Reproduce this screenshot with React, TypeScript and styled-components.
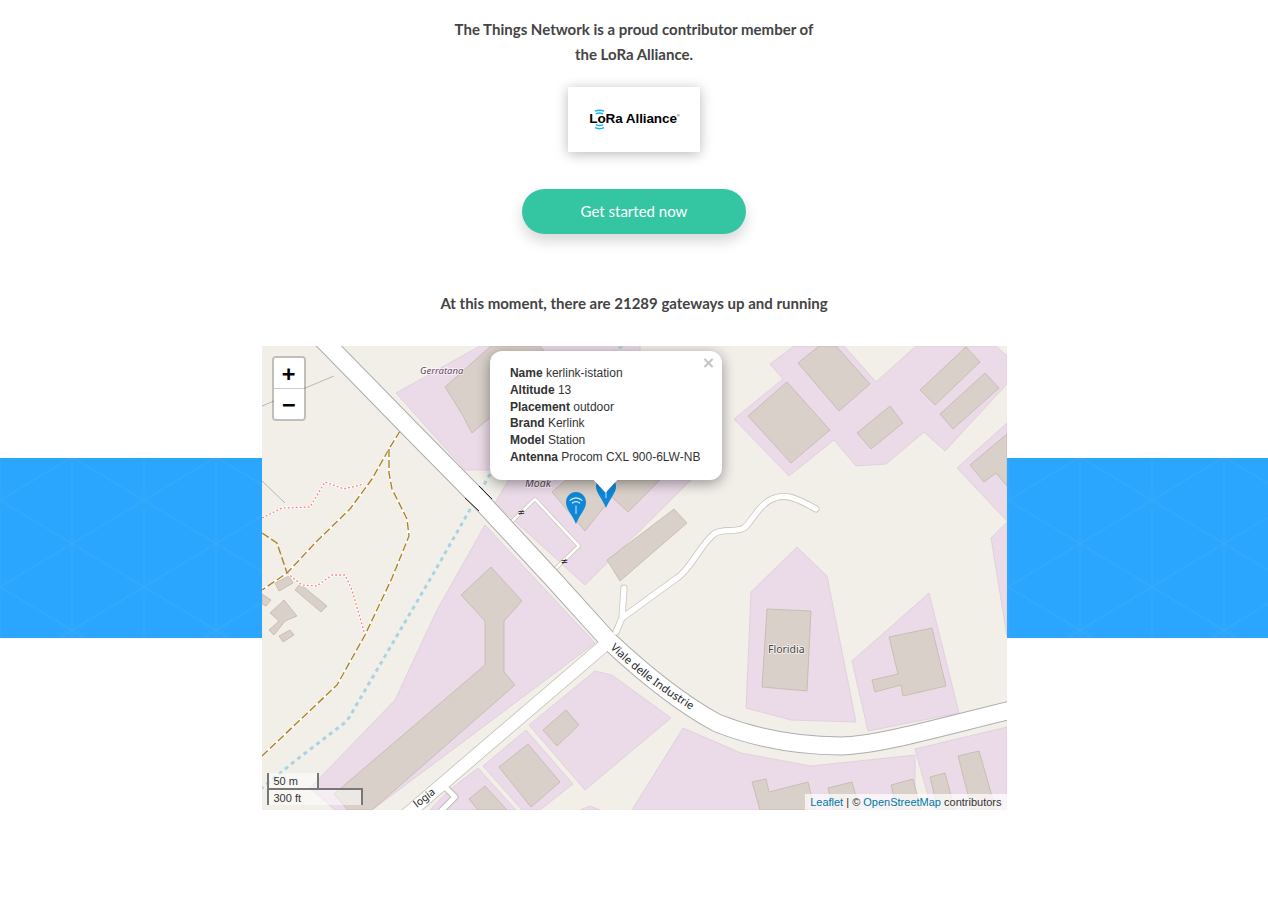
import React from "react";
import styled, { createGlobalStyle } from "styled-components";

const Global = createGlobalStyle`
  html, body { margin: 0; padding: 0; background: #fff; }
  body { font-family: Lato, "Liberation Sans", sans-serif; color: #444; }
`;
const Page = styled.main`
  display: flex; flex-direction: column; align-items: center;
  padding-top: 17px; min-height: 893px;
`;
const Lead = styled.p`
  margin: 0; width: 370px; text-align: center;
  font: 700 15px/25px Lato, sans-serif; color: #444;
`;
const LogoCard = styled.div`
  margin-top: 20px; width: 132px; height: 65px; background: #fff;
  display: flex; align-items: center; justify-content: center;
  box-shadow: 0 2px 12px rgba(0,0,0,.28);
`;
const LogoWord = styled.div`
  position: relative; display: flex; align-items: flex-start; margin: 0 0 2px 1px;
  font: 700 13.5px/14px "Liberation Sans", sans-serif; color: #000; letter-spacing: -.1px;
  white-space: nowrap;
`;
const LogoWaves = styled.svg`
  position: absolute; left: 5px; top: -3px; width: 11px; height: 22px;
`;
const Reg = styled.span`
  font-size: 4px; line-height: 8px; font-weight: 400;
`;
const CallToAction = styled.a`
  margin-top: 37px; width: 224px; height: 45px; box-sizing: border-box; padding-bottom: 2px;
  border-radius: 23px;
  display: flex; align-items: center; justify-content: center;
  background: #34c5a2; color: #fff; font: 400 15px Lato, sans-serif;
  box-shadow: 0 7px 14px rgba(0,0,0,.16);
`;
const Status = styled(Lead)`
  margin-top: 57px; width: 600px;
`;
const MapSection = styled.section`
  position: relative; margin-top: 30px; width: 100%;
  display: flex; justify-content: center;
`;
const Band = styled.svg`
  position: absolute; left: 0; top: 112px; width: 100%; height: 180px; display: block;
`;
const MapFrame = styled.div`
  position: relative; width: 745px; height: 464px; overflow: hidden; background: #f2efe9;
`;
const Tiles = styled.svg`
  display: block; width: 745px; height: 464px;
`;
const ZoomBox = styled.div`
  position: absolute; left: 10px; top: 10px;
  display: flex; flex-direction: column; width: 30px;
  border: 2px solid rgba(0,0,0,.2); border-radius: 4px; background-clip: padding-box;
`;
const ZoomButton = styled.a`
  width: 30px; height: 30px; background: #fff; color: #000; text-align: center;
  font: 700 22px/32px "DejaVu Sans Mono", monospace; overflow: hidden;
  &:first-child { border-bottom: 1px solid #ccc; border-radius: 2px 2px 0 0; }
  &:last-child { border-radius: 0 0 2px 2px; }
`;
const Marker = styled.svg<{ $x: number; $y: number }>`
  position: absolute; left: ${p => p.$x}px; top: ${p => p.$y}px; width: 20px; height: 32px;
`;
const Popup = styled.div`
  position: absolute; left: 228px; top: 5px; width: 232px; box-sizing: border-box;
  padding: 14px 20px 14px 20.4px; background: #fff; border-radius: 12px; color: #333;
  font: 12px/16.8px "Liberation Sans", sans-serif; white-space: nowrap;
  box-shadow: 0 3px 14px rgba(0,0,0,.4);
`;
const PopupRow = styled.div`
  b { font-weight: 700; }
`;
const PopupClose = styled.a`
  position: absolute; top: 1px; right: 0; width: 18px; height: 14px; padding: 4px 4px 0 0;
  text-align: center; color: #c3c3c3; font: 700 16px/14px "DejaVu Sans", sans-serif;
`;
const PopupTip = styled.div`
  position: absolute; left: 50%; top: 100%; margin-left: -12px; width: 24px; height: 13px;
  background: #fff; clip-path: polygon(0 0, 100% 0, 50% 100%);
`;
const ScaleBox = styled.div`
  position: absolute; left: 5px; bottom: 5px;
  display: flex; flex-direction: column; align-items: flex-start;
`;
const ScaleLine = styled.div<{ $w: number; $lower?: boolean }>`
  box-sizing: border-box; width: ${p => p.$w}px; height: 17px; padding: 2px 5px 1px;
  border: 2px solid #777; background: rgba(255,255,255,.5); color: #333;
  font: 11px/12px "Liberation Sans", sans-serif; white-space: nowrap;
  border-top: ${p => (p.$lower ? "2px solid #777" : "none")};
  border-bottom: ${p => (p.$lower ? "none" : "2px solid #777")};
  margin-top: ${p => (p.$lower ? "-2px" : "0")};
`;
const Attribution = styled.div`
  position: absolute; right: 0; bottom: 0; height: 16px; padding: 0 5px;
  background: rgba(255,255,255,.7); color: #333;
  font: 11px/16px "Liberation Sans", sans-serif; white-space: nowrap;
  a { color: #0078a8; }
`;
const Land = styled.polygon`
  fill: #ebdbe8; stroke: #dccdd8; stroke-width: .8;
`;
const Building = styled.polygon`
  fill: #d9d0c9; stroke: #c4b6ab; stroke-width: .8;
`;
const Line = styled.polyline<{ $c: string; $w: number; $dash?: string }>`
  fill: none; stroke: ${p => p.$c}; stroke-width: ${p => p.$w};
  stroke-dasharray: ${p => p.$dash || "none"}; stroke-linejoin: round;
`;
const Curve = styled.path<{ $c: string; $w: number; $round?: boolean }>`
  fill: none; stroke: ${p => p.$c}; stroke-width: ${p => p.$w};
  stroke-linejoin: round; stroke-linecap: ${p => (p.$round ? "round" : "butt")};
`;
const MapLabel = styled.text<{ $c: string; $s: number; $italic?: boolean }>`
  fill: ${p => p.$c}; font-family: "Noto Sans", "Open Sans", sans-serif;
  font-size: ${p => p.$s}px; font-style: ${p => (p.$italic ? "italic" : "normal")};
  paint-order: stroke; stroke: rgba(255,255,255,.75); stroke-width: 1.6px;
`;
const RoadLabel = styled(MapLabel)`
  stroke: none;
`;

const lands = [
  "396,393 480,346 640,346 640,430 520,470 465,470",
  "509,479 691,480 585,585 495,503",
  "770,364 794,346 844,346 876,382 916,346 996,346 1007,356 1007,384 945,451 924,432 886,464 856,466 834,440 789,476 734,419 783,379",
  "957,468 1007,423 1007,521",
  "991,538 1007,522 1007,636",
  "797,547 827,576 856,722 791,720 746,708 751,592",
  "852,661 929,593 959,713 868,731",
  "683,728 741,753 811,766 915,755 915,810 632,810",
  "915,749 1007,727 1007,810 932,810",
  "485,525 595,643 372,810 335,810 310,788 395,700 437,610",
  "529,725 595,671 612,675 671,718 585,790",
  "483,766 526,730 573,784 540,810 522,810",
  "448,791 478,768 516,810 430,810",
  "580,810 590,806 600,810",
];
const buildings = [
  "445,387 491,346 540,346 560,370 486,421 472,433 462,414",
  "552,492 566,480 660,480 628,512 612,497 585,531",
  "607,560 674,509 687,523 620,581",
  "748,416 787,382 830,430 791,463",
  "798,363 819,346 836,346 870,384 839,411",
  "857,433 890,406 903,423 871,449",
  "920,390 966,347 980,362 935,405",
  "940,414 985,373 999,388 953,429",
  "970,465 1007,434 1007,486 996,473 984,482",
  "767,609 811,611 807,691 762,687",
  "889,637 932,628 946,686 903,696 901,685 875,692 872,680 898,674",
  "958,756 979,751 996,810 972,810",
  "752,782 766,779 769,792 808,782 815,810 760,810",
  "828,788 852,782 860,810 833,810",
  "891,785 913,779 921,810 897,810",
  "930,777 945,773 955,810 938,810",
  "461,595 491,567 522,601 504,621 504,672 515,685 372,810 348,810 334,794 485,665 485,621",
  "543,730 566,710 579,725 557,746",
  "499,767 528,744 560,782 531,807",
  "469,799 485,786 507,810 478,810",
  "262,594 271,600 266,606 262,604",
  "275,583 289,576 293,583 279,591",
  "295,590 300,584 327,606 321,612",
  "270,613 284,600 297,616 285,621 274,635 269,630 279,621",
  "279,636 290,630 294,635 283,642",
];
const mainRoad = "M316 333 L 329 346 L 412 431 L 478 498 L 552 578 L 609 641 C 640 670 680 703 717 723 C 765 742 810 746 841 746 C 880 745 940 727 1015 709";
const sideRoad = "M606 644 L 412 810 L 400 820";
const spur = "M444 786 L 455 797 L 441 811";
const serviceRoad = "M624 588 L 622 618 L 616 632 M622 618 L 677 578 C 690 570 700 545 714 534 C 722 528 735 533 744 528 C 752 522 760 502 775 498 C 785 494 795 497 816 509";
const yard = "505,528 535,499 579,546 553,571";
const brownDash = "8 3";

const Pin: React.FC<{ x: number; y: number }> = ({ x, y }) => (
  <Marker $x={x} $y={y} viewBox="0 0 20 32">
    <path d="M10 0C4.4 0 0 4.5 0 10.4 0 17 6 22 10 32 14 22 20 17 20 10.4 20 4.5 15.6 0 10 0Z" fill="#0f86d6" />
    <path d="M3.6 8.6Q10 3 16.4 8.6M6 11.2Q10 8 14 11.2" fill="none" stroke="#dff1fb" strokeWidth="1.2" />
    <path d="M10 13.5V22" stroke="#a9d8f3" strokeWidth="1.2" />
  </Marker>
);

export default function App() {
  return (
    <>
      <Global />
      <Page>
        <Lead>The Things Network is a proud contributor member of the LoRa Alliance.</Lead>
        <LogoCard>
          <LogoWord>
            LoRa Alliance<Reg>®</Reg>
            <LogoWaves viewBox="0 0 12 24">
              <path d="M2 5.4Q6 3.4 10 5.4M1 2.4Q6 .2 11 2.4M2 17Q6 19 10 17M1 20.4Q6 22.6 11 20.4" fill="none" stroke="#12b4ee" strokeWidth="1.5" />
            </LogoWaves>
          </LogoWord>
        </LogoCard>
        <CallToAction>Get started now</CallToAction>
        <Status>At this moment, there are 21289 gateways up and running</Status>
        <MapSection>
          <Band preserveAspectRatio="none">
            <defs>
              <pattern id="tri" x="0" y="-1" width="144" height="86.6" patternUnits="userSpaceOnUse">
                <rect width="144" height="86.6" fill="#2aa6ff" />
                <path d="M0 43.3L72 0L144 43.3L72 86.6ZM72 0V86.6M144 0V86.6M0 0V86.6" fill="none" stroke="#38aafa" strokeWidth="1.3" />
              </pattern>
            </defs>
            <rect width="100%" height="100%" fill="url(#tri)" />
          </Band>
          <MapFrame>
            <Tiles viewBox="262 346 745 464">
              <rect x="262" y="346" width="745" height="464" fill="#f2efe9" />
              {lands.map(p => <Land key={p} points={p} />)}
              {buildings.map(p => <Building key={p} points={p} />)}
              <Line points="262,406 334,376" $c="#aaa" $w={0.8} />
              <Line points="262,481 285,503" $c="#aaa" $w={0.8} />
              <Line points="622,346 608,358 492,471 432,576 347,721 295,761 262,788" $c="#a8d4e2" $w={3} $dash="4 4" />
              <Line points="262,518 282,508 310,507 325,482 344,489 364,484" $c="#fff" $w={2.4} />
              <Line points="262,518 282,508 310,507 325,482 344,489 364,484" $c="#f7897c" $w={1.3} $dash="2 2" />
              <Line points="287,573 302,585 317,586 332,575 345,575 352,590 365,635" $c="#fff" $w={2.4} />
              <Line points="287,573 302,585 317,586 332,575 345,575 352,590 365,635" $c="#f7897c" $w={1.3} $dash="2 2" />
              <Line points="400,431 389,449 372,479 350,509 317,541 287,573 262,590" $c="#fff" $w={2.4} />
              <Line points="400,431 389,449 372,479 350,509 317,541 287,573 262,590" $c="#ac8327" $w={1.4} $dash={brownDash} />
              <Line points="389,449 389,473 392,489 407,519 409,536 392,578 365,635 337,685 262,756" $c="#fff" $w={2.4} />
              <Line points="389,449 389,473 392,489 407,519 409,536 392,578 365,635 337,685 262,756" $c="#ac8327" $w={1.4} $dash={brownDash} />
              <Line points="262,533 277,543 287,573" $c="#ac8327" $w={1.4} $dash={brownDash} />
              <Line points={yard} $c="#c9c1b9" $w={4} />
              <Line points={yard} $c="#fff" $w={2.6} />
              <Curve d={serviceRoad} $c="#cbc6be" $w={7} $round />
              <Curve d={sideRoad} $c="#c4bfb9" $w={14} />
              <Curve d={spur} $c="#bbb" $w={7} />
              <Curve d={mainRoad} $c="#adadad" $w={19} />
              <Curve d={serviceRoad} $c="#fff" $w={5.4} $round />
              <Curve d={sideRoad} $c="#fff" $w={12.4} />
              <Curve d={spur} $c="#fff" $w={5} />
              <Curve d={mainRoad} $c="#fff" $w={17} />
              <Line points="465,498 479,511" $c="#222" $w={1} />
              <Line points="479,486 492,499" $c="#222" $w={1} />
              <defs>
                <path id="viale" d="M610 648 C 630 668 660 692 698 714" />
              </defs>
              <RoadLabel $c="#222" $s={11}>
                <textPath href="#viale">Viale delle Industrie</textPath>
              </RoadLabel>
              <RoadLabel $c="#222" $s={10.5} transform="rotate(-38 417 808)" x="417" y="808">logia</RoadLabel>
              <MapLabel $c="#444" $s={10.5} x="768" y="653">Floridia</MapLabel>
              <MapLabel $c="#66405f" $s={9.5} $italic x="420" y="374">Gerratana</MapLabel>
              <MapLabel $c="#66405f" $s={10.5} $italic x="525" y="487">Moak</MapLabel>
              <text x="517.5" y="515" fontSize="9" fontFamily="DejaVu Sans" fill="#222">≠</text>
              <text x="560.5" y="564" fontSize="9" fontFamily="DejaVu Sans" fill="#222">≠</text>
            </Tiles>
            <ZoomBox>
              <ZoomButton>+</ZoomButton>
              <ZoomButton>−</ZoomButton>
            </ZoomBox>
            <Pin x={334} y={130} />
            <Pin x={304} y={146} />
            <Popup>
              <PopupClose>×</PopupClose>
              <PopupRow><b>Name</b> kerlink-istation</PopupRow>
              <PopupRow><b>Altitude</b> 13</PopupRow>
              <PopupRow><b>Placement</b> outdoor</PopupRow>
              <PopupRow><b>Brand</b> Kerlink</PopupRow>
              <PopupRow><b>Model</b> Station</PopupRow>
              <PopupRow><b>Antenna</b> Procom CXL 900-6LW-NB</PopupRow>
              <PopupTip />
            </Popup>
            <ScaleBox>
              <ScaleLine $w={52}>50 m</ScaleLine>
              <ScaleLine $w={96} $lower>300 ft</ScaleLine>
            </ScaleBox>
            <Attribution>
              <a>Leaflet</a> | © <a>OpenStreetMap</a> contributors
            </Attribution>
          </MapFrame>
        </MapSection>
      </Page>
    </>
  );
}
